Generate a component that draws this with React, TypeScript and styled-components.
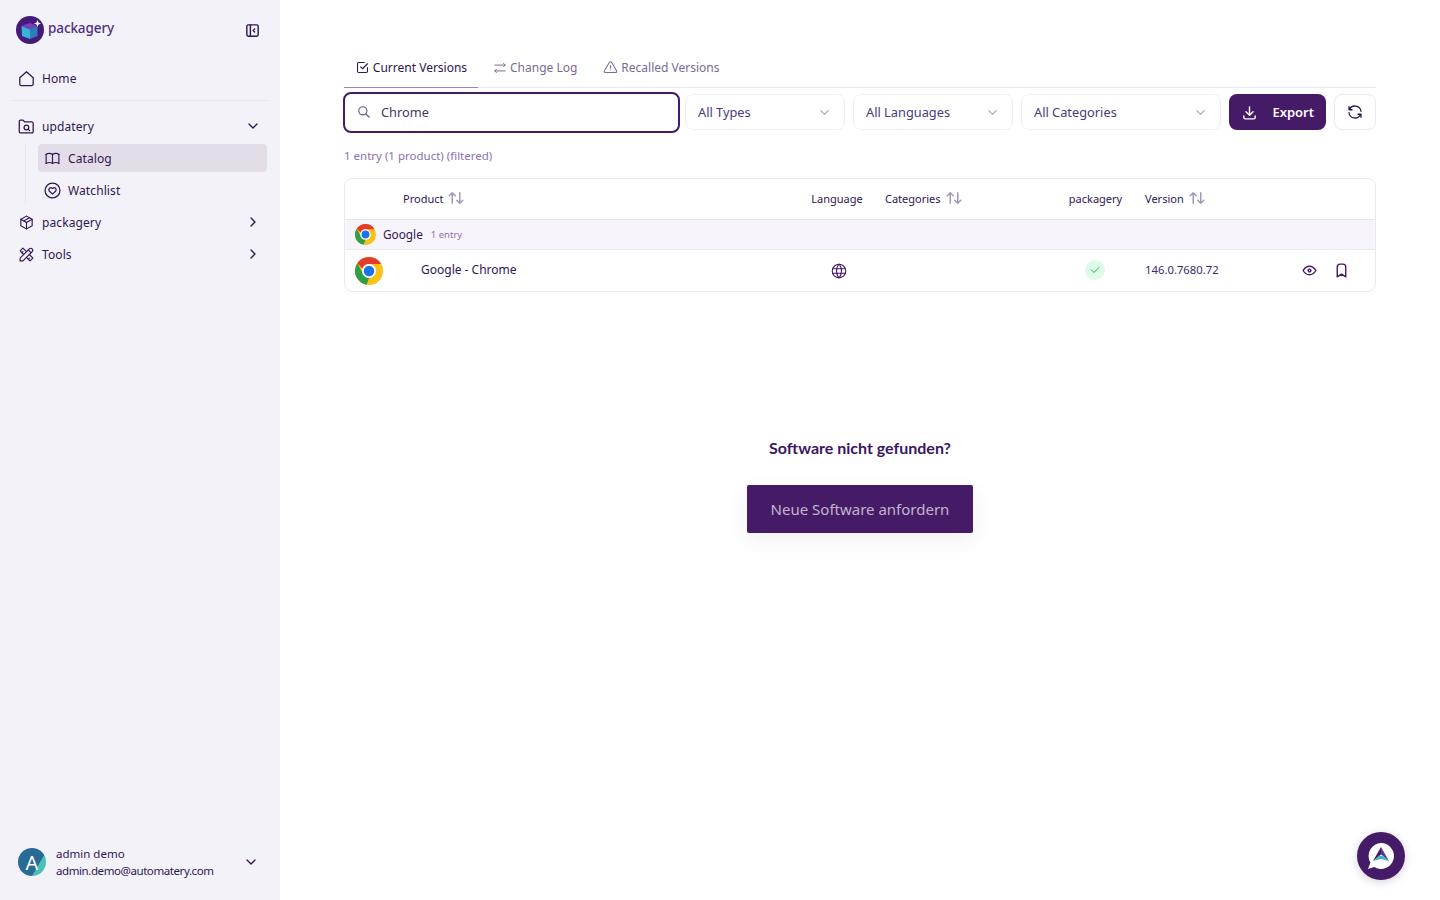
import React from 'react';
import styled, { createGlobalStyle } from 'styled-components';
import {
    TbAlertTriangle,
    TbArrowsRightLeft,
    TbBook,
    TbBookmark,
    TbChevronDown,
    TbChevronRight,
    TbDownload,
    TbEye,
    TbLayoutSidebarLeftCollapse,
    TbPackage,
    TbRefresh,
    TbSearch,
    TbCheckbox,
    TbTools,
    TbWorld,
    TbCheck,
    TbArrowsSort,
} from 'react-icons/tb';

const INK = '#2f1652';
const PURPLE = '#451a66';
const SOFT = '#7d6a96';
const COLUMNS = '455px 74px 183px 77px 151px 1fr';

const GlobalStyle = createGlobalStyle`
    html, body {
        margin: 0;
        padding: 0;
        height: 100%;
        background: #ffffff;
        font-family: "Noto Sans", "Open Sans", sans-serif;
        color: ${INK};
    }
    #root {
        height: 100%;
    }
    * {
        box-sizing: border-box;
    }
`;

const ChromeLogo = ({ size }: { size: number }) => (
    <svg width={size} height={size} viewBox="0 0 48 48">
        <circle cx="24" cy="24" r="24" fill="#fbc116" />
        <path d="M24 0a24 24 0 0 1 20.8 12H24a12 12 0 0 0-11.2 7.6L3.9 10.8A24 24 0 0 1 24 0z" fill="#e33b2e" />
        <path d="M3.9 10.8 14.4 30 24 36 20 47.7A24 24 0 0 1 3.9 10.8z" fill="#2f9e48" />
        <circle cx="24" cy="24" r="12" fill="#ffffff" />
        <circle cx="24" cy="24" r="9" fill="#1a73e8" />
    </svg>
);

const PackageryLogo = () => (
    <svg width="28" height="28" viewBox="0 0 28 28">
        <circle cx="14" cy="14" r="14" fill="#451a7a" />
        <path d="M5.5 10 14 7l7.5 3-7 3.5z" fill="#7b3fc4" />
        <path d="M5.5 10l8.5 3.5V23l-8-3z" fill="#37b3d6" />
        <path d="M14 13.5l7.5-3.5v10L14 23z" fill="#2c7fb8" />
        <path d="M21.5 4l1 2.5 2.5 1-2.5 1-1 2.5-1-2.5-2.5-1 2.5-1z" fill="#ffffff" />
    </svg>
);

const HomeIcon = () => (
    <svg width="17" height="17" viewBox="0 0 16 16" fill="none" stroke="currentColor" strokeWidth="1.2" strokeLinejoin="round">
        <path d="M1.7 7.2 8 1.6l6.3 5.6v6a1.4 1.4 0 0 1-1.4 1.4H3.1a1.4 1.4 0 0 1-1.4-1.4z" />
    </svg>
);

const FolderSearchIcon = () => (
    <svg width="17" height="17" viewBox="0 0 16 16" fill="none" stroke="currentColor" strokeWidth="1.2" strokeLinejoin="round" strokeLinecap="round">
        <path d="M1.2 13V3a1 1 0 0 1 1-1h2.6l1.4 1.7h6.6a1.5 1.5 0 0 1 1.5 1.5v7.6a1.2 1.2 0 0 1-1.2 1.2H2.4A1.2 1.2 0 0 1 1.2 13z" />
        <circle cx="7.9" cy="8.9" r="2.2" />
        <path d="m9.6 10.6 1.3 1.3" />
    </svg>
);

const HeartCircleIcon = () => (
    <svg width="17" height="17" viewBox="0 0 16 16" fill="none" stroke="currentColor" strokeWidth="1.2" strokeLinejoin="round">
        <circle cx="8" cy="8" r="7" />
        <path d="M8 11.4 4.9 8.4a1.9 1.9 0 0 1 2.7-2.6l.4.4.4-.4a1.9 1.9 0 0 1 2.7 2.6z" />
    </svg>
);

const BotLogo = () => (
    <svg width="32" height="32" viewBox="0 0 32 32">
        <path d="M16 3a13 13 0 1 1-6.8 24.1L3 29l2.4-6.4A13 13 0 0 1 16 3z" fill="#ffffff" />
        <path d="M16 7 8 21l8-6.5z" fill="#451a66" />
        <path d="M16 7l8 14-8-6.5z" fill="#5a3a9a" />
        <path d="M8 21l6-5h4l6 5-8-2z" fill="#3fb5bd" />
    </svg>
);

const App = () => {
    return (
        <PageContainer>
            <GlobalStyle />
            <Sidebar>
                <SidebarTop>
                    <LogoRow>
                        <PackageryLogo />
                        <LogoText>packagery</LogoText>
                    </LogoRow>
                    <CollapseButton>
                        <TbLayoutSidebarLeftCollapse size={17} />
                    </CollapseButton>
                </SidebarTop>

                <NavItem>
                    <HomeIcon />
                    <NavLabel>Home</NavLabel>
                </NavItem>
                <NavDivider />
                <NavItem>
                    <FolderSearchIcon />
                    <NavLabel>updatery</NavLabel>
                    <TbChevronDown size={16} />
                </NavItem>
                <SubNav>
                    <SubNavItem $active>
                        <TbBook size={17} strokeWidth={1.6} />
                        <NavLabel>Catalog</NavLabel>
                    </SubNavItem>
                    <SubNavItem>
                        <HeartCircleIcon />
                        <NavLabel>Watchlist</NavLabel>
                    </SubNavItem>
                </SubNav>
                <NavItem>
                    <TbPackage size={17} strokeWidth={1.6} />
                    <NavLabel>packagery</NavLabel>
                    <TbChevronRight size={16} />
                </NavItem>
                <NavItem>
                    <TbTools size={17} strokeWidth={1.6} />
                    <NavLabel>Tools</NavLabel>
                    <TbChevronRight size={16} />
                </NavItem>

                <UserRow>
                    <Avatar>A</Avatar>
                    <UserInfo>
                        <UserLine>admin demo</UserLine>
                        <UserEmail>admin.demo@automatery.com</UserEmail>
                    </UserInfo>
                    <TbChevronDown size={16} />
                </UserRow>
            </Sidebar>

            <Main>
                <Tabs>
                    <Tab $active $width={134}>
                        <TbCheckbox size={15} strokeWidth={1.7} />
                        Current Versions
                    </Tab>
                    <Tab>
                        <TbArrowsRightLeft size={14} strokeWidth={1.7} />
                        Change Log
                    </Tab>
                    <Tab>
                        <TbAlertTriangle size={15} strokeWidth={1.7} />
                        Recalled Versions
                    </Tab>
                </Tabs>

                <Toolbar>
                    <SearchBox>
                        <TbSearch size={14} color="#6f5a8c" />
                        <span>Chrome</span>
                    </SearchBox>
                    <Select $width={160}>
                        All Types
                        <TbChevronDown size={15} color="#b3a8c4" />
                    </Select>
                    <Select $width={160}>
                        All Languages
                        <TbChevronDown size={15} color="#b3a8c4" />
                    </Select>
                    <Select $width={200}>
                        All Categories
                        <TbChevronDown size={15} color="#b3a8c4" />
                    </Select>
                    <ExportButton>
                        <TbDownload size={17} />
                        Export
                    </ExportButton>
                    <RefreshButton>
                        <TbRefresh size={18} strokeWidth={1.7} />
                    </RefreshButton>
                </Toolbar>

                <Summary>1 entry (1 product) (filtered)</Summary>

                <Table>
                    <HeaderRow>
                        <ProductHead>
                            Product
                            <TbArrowsSort size={18} color="#a597ba" />
                        </ProductHead>
                        <HeadCell $center>Language</HeadCell>
                        <HeadCell>
                            Categories
                            <TbArrowsSort size={18} color="#a597ba" />
                        </HeadCell>
                        <HeadCell $center>packagery</HeadCell>
                        <HeadCell>
                            Version
                            <TbArrowsSort size={18} color="#a597ba" />
                        </HeadCell>
                        <div />
                    </HeaderRow>
                    <GroupRow>
                        <ChromeLogo size={21} />
                        <GroupName>Google</GroupName>
                        <GroupCount>1 entry</GroupCount>
                    </GroupRow>
                    <BodyRow>
                        <ProductCell>
                            <ChromeLogo size={28} />
                            <ProductName>Google - Chrome</ProductName>
                        </ProductCell>
                        <GlobeCell $center>
                            <TbWorld size={18} strokeWidth={1.5} />
                        </GlobeCell>
                        <BodyCell />
                        <BodyCell $center>
                            <CheckBadge>
                                <TbCheck size={12} />
                            </CheckBadge>
                        </BodyCell>
                        <VersionCell>146.0.7680.72</VersionCell>
                        <ActionCell>
                            <TbEye size={17} />
                            <TbBookmark size={17} />
                        </ActionCell>
                    </BodyRow>
                </Table>

                <RequestBlock>
                    <RequestTitle>Software nicht gefunden?</RequestTitle>
                    <RequestButton>Neue Software anfordern</RequestButton>
                </RequestBlock>
            </Main>

            <ChatBubble>
                <BotLogo />
            </ChatBubble>
        </PageContainer>
    );
};

const PageContainer = styled.div`
    display: flex;
    height: 900px;
    overflow: hidden;
`;

const Sidebar = styled.aside`
    display: flex;
    flex-flow: column;
    flex: 0 0 280px;
    padding: 16px 12px 22px 12px;
    background: #f4f2f9;
`;

const SidebarTop = styled.div`
    display: flex;
    align-items: center;
    justify-content: space-between;
    height: 28px;
    padding: 0 7px 0 4px;
    margin-bottom: 20px;
`;

const LogoRow = styled.div`
    display: flex;
    align-items: flex-start;
    gap: 4px;
`;

const LogoText = styled.span`
    font-size: 13.5px;
    font-weight: 500;
    line-height: 24px;
    color: #4d2f80;
    letter-spacing: -0.1px;
`;

const CollapseButton = styled.div`
    display: flex;
    color: ${INK};
`;

const NavItem = styled.div`
    display: flex;
    align-items: center;
    gap: 7px;
    height: 28px;
    padding: 0 7px 0 6px;
    margin-bottom: 4px;
    color: ${INK};
`;

const NavLabel = styled.span`
    flex: 1;
    font-size: 12px;
    letter-spacing: 0.1px;
`;

const NavDivider = styled.div`
    height: 1px;
    margin: 4px 0 11px;
    background: #e9e6ef;
`;

const SubNav = styled.div`
    display: flex;
    flex-flow: column;
    gap: 4px;
    margin: 0 1px 4px 13px;
    padding-left: 12px;
    border-left: 1px solid #e9e6ef;
`;

const SubNavItem = styled.div<{ $active?: boolean }>`
    display: flex;
    align-items: center;
    gap: 7px;
    height: 28px;
    padding: 0 6px;
    border-radius: 4px;
    color: ${INK};
    background: ${({ $active }) => ($active ? '#e3dde8' : 'transparent')};
`;

const UserRow = styled.div`
    display: flex;
    align-items: center;
    gap: 10px;
    margin-top: auto;
    padding: 0 9px 0 6px;
    color: ${INK};
`;

const Avatar = styled.div`
    display: flex;
    align-items: center;
    justify-content: center;
    width: 28px;
    height: 28px;
    border-radius: 50%;
    font-size: 20px;
    color: #ffffff;
    background: linear-gradient(120deg, #286b96 68%, #48c0b8 69%);
`;

const UserInfo = styled.div`
    display: flex;
    flex: 1;
    flex-flow: column;
    gap: 2px;
`;

const UserLine = styled.span`
    font-size: 11.5px;
    line-height: 15px;
`;

const UserEmail = styled(UserLine)`
    letter-spacing: -0.42px;
`;

const Main = styled.main`
    display: flex;
    flex: 1;
    flex-flow: column;
    min-width: 0;
    padding: 50px 64px 0;
`;

const Tabs = styled.div`
    display: flex;
    height: 38px;
    border-bottom: 1px solid #e9e8ec;
`;

const Tab = styled.div<{ $active?: boolean; $width?: number }>`
    display: flex;
    align-items: center;
    justify-content: center;
    gap: 3px;
    height: 38px;
    padding: 0 ${({ $active }) => ($active ? '0' : '11px')} 3px;
    margin-right: 4px;
    font-size: 12px;
    white-space: nowrap;
    color: ${({ $active }) => ($active ? INK : SOFT)};
    border-bottom: ${({ $active }) => ($active ? '1px solid #9a86b5' : 'none')};
    width: ${({ $width }) => ($width ? `${$width}px` : 'auto')};
`;

const Toolbar = styled.div`
    display: flex;
    align-items: center;
    gap: 8px;
    height: 40px;
    margin-top: 4px;
    margin-left: -1px;
`;

const SearchBox = styled.div`
    display: flex;
    align-items: center;
    gap: 10px;
    flex: 0 0 337px;
    height: 41px;
    padding: 0 12px;
    margin-right: -3px;
    border: 2px solid ${PURPLE};
    border-radius: 8px;
    font-size: 12.8px;
    color: #4a3566;
`;

const Select = styled.div<{ $width: number }>`
    display: flex;
    align-items: center;
    justify-content: space-between;
    flex: 0 0 ${({ $width }) => $width}px;
    height: 36px;
    padding: 0 12px;
    border: 1px solid #f0eef3;
    border-radius: 8px;
    font-size: 12.8px;
    color: #4a3a78;
`;

const ExportButton = styled.div`
    display: flex;
    align-items: center;
    justify-content: space-between;
    flex: 0 0 97px;
    height: 36px;
    padding: 0 12px;
    border-radius: 8px;
    font-size: 13px;
    font-weight: 600;
    color: #ffffff;
    background: ${PURPLE};
`;

const RefreshButton = styled.div`
    display: flex;
    align-items: center;
    justify-content: center;
    flex: 0 0 42px;
    height: 36px;
    border: 1px solid #e9e8ec;
    border-radius: 8px;
    color: ${INK};
`;

const Summary = styled.div`
    margin-top: 16px;
    font-size: 11.5px;
    line-height: 16px;
    color: #8c6fb4;
`;

const Table = styled.div`
    display: flex;
    flex-flow: column;
    margin-top: 14px;
    border: 1px solid #e9e8ec;
    border-radius: 8px;
    overflow: hidden;
`;

const HeaderRow = styled.div`
    display: grid;
    grid-template-columns: ${COLUMNS};
    align-items: center;
    height: 41px;
    padding-bottom: 2px;
    border-bottom: 1px solid #e6e4ea;
`;

const HeadCell = styled.div<{ $center?: boolean }>`
    display: flex;
    align-items: center;
    justify-content: ${({ $center }) => ($center ? 'center' : 'flex-start')};
    gap: 4px;
    padding-left: ${({ $center }) => ($center ? '0' : '11px')};
    font-size: 11px;
    color: ${INK};
`;

const ProductHead = styled(HeadCell)`
    padding-left: 58px;
`;

const GroupRow = styled.div`
    display: flex;
    align-items: center;
    height: 30px;
    padding-left: 10px;
    background: #f7f5fb;
    border-bottom: 1px solid #e9e8ec;
`;

const GroupName = styled.span`
    margin: 0 0 2px 7px;
    font-size: 11.8px;
`;

const GroupCount = styled.span`
    margin-left: 8px;
    font-size: 9.5px;
    color: #8c6fb4;
`;

const BodyRow = styled.div`
    display: grid;
    grid-template-columns: ${COLUMNS};
    align-items: center;
    height: 41px;
`;

const BodyCell = styled.div<{ $center?: boolean }>`
    display: flex;
    align-items: center;
    justify-content: ${({ $center }) => ($center ? 'center' : 'flex-start')};
    padding-left: ${({ $center }) => ($center ? '0' : '11px')};
    font-size: 11.5px;
    color: ${INK};
`;

const GlobeCell = styled(BodyCell)`
    padding-left: 3px;
    color: ${PURPLE};
`;

const VersionCell = styled(BodyCell)`
    padding-bottom: 2px;
    font-size: 11.3px;
    color: #3d2a6a;
`;

const ProductCell = styled.div`
    display: flex;
    align-items: center;
    gap: 38px;
    padding-left: 10px;
`;

const ProductName = styled.span`
    padding-bottom: 2px;
    font-size: 12px;
`;

const CheckBadge = styled.div`
    display: flex;
    align-items: center;
    justify-content: center;
    width: 20px;
    height: 20px;
    margin: -2px 1px 0 0;
    border-radius: 50%;
    color: #27a74f;
    background: #dcfce7;
`;

const ActionCell = styled.div`
    display: flex;
    align-items: center;
    gap: 15px;
    padding: 0 0 1px 16px;
    color: ${PURPLE};
`;

const RequestBlock = styled.div`
    display: flex;
    flex-flow: column;
    align-items: center;
    margin-top: 146px;
`;

const RequestTitle = styled.div`
    font-family: "Lato", "Noto Sans", sans-serif;
    font-size: 16px;
    font-weight: 700;
    line-height: 20px;
    color: #3a1664;
`;

const RequestButton = styled.div`
    display: flex;
    align-items: center;
    justify-content: center;
    width: 226px;
    height: 48px;
    margin-top: 27px;
    border-radius: 2px;
    font-size: 15px;
    color: #c0b6cc;
    background: ${PURPLE};
    box-shadow: 0 6px 20px rgba(69, 26, 102, 0.08);
`;

const ChatBubble = styled.div`
    position: fixed;
    right: 35px;
    bottom: 20px;
    display: flex;
    align-items: center;
    justify-content: center;
    width: 48px;
    height: 48px;
    border-radius: 50%;
    background: ${PURPLE};
    box-shadow: 0 2px 10px rgba(69, 26, 102, 0.2);
`;

export default App;
